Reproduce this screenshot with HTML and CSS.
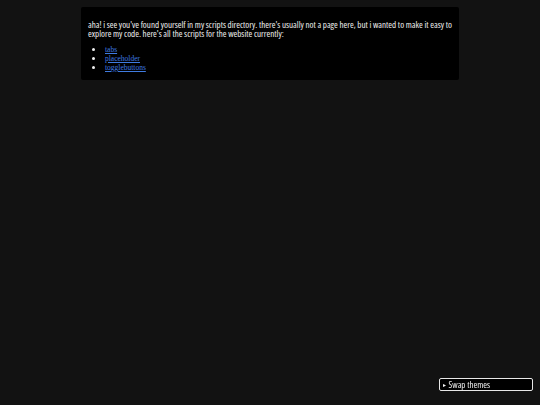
FILE: index.html
```html
<!DOCTYPE html>
<html>
<head>
<meta charset="utf-8">
<link rel="stylesheet" href="styles.css">
</head>
<body>
<main class="card">
<p class="intro">aha! i see you've found yourself in my scripts directory. there's usually not a page here, but i wanted to make it easy to explore my code. here's all the scripts for the website currently:</p>
<ul class="scripts">
<li><a href="#">tabs</a></li>
<li><a href="#">placeholder</a></li>
<li><a href="#">togglebuttons</a></li>
</ul>
</main>
<button class="swap"><span class="tri">&#9658;</span> Swap themes</button>
</body>
</html>
```
FILE: styles.css
```css
html, body {
  margin: 0;
  padding: 0;
  background: #121212;
  height: 100%;
}
body {
  font-family: "Open Sans", sans-serif;
  font-stretch: 75%;
  font-weight: 400;
  font-size: 9px;
  color: #f0f0f0;
  padding-top: 7px;
  box-sizing: border-box;
}
.card {
  display: block;
  width: 70%;
  margin: 0 auto;
  background: #000;
  border-radius: 2px;
  padding: 13px 7px 10px;
  box-sizing: border-box;
  height: 73px;
}
.intro {
  margin: 0;
  line-height: 9px;
}
.scripts {
  margin: 7px 0 0;
  padding-left: 17px;
  line-height: 8px;
}
.scripts a {
  font-family: "Liberation Serif", serif;
  font-stretch: normal;
  font-weight: normal;
  color: #3f7be0;
  font-size: 7.5px;
}
.swap {
  position: fixed;
  right: 7px;
  bottom: 14px;
  width: 94px;
  height: 13px;
  background: #000;
  color: #f0f0f0;
  border: 1px solid #e8e8e8;
  border-radius: 2px;
  font-family: "Open Sans", sans-serif;
  font-stretch: 75%;
  font-weight: 400;
  font-size: 9px;
  text-align: left;
  padding: 0 2px;
  line-height: 11px;
}
.tri {
  font-size: 5px;
  vertical-align: 1px;
}
```
